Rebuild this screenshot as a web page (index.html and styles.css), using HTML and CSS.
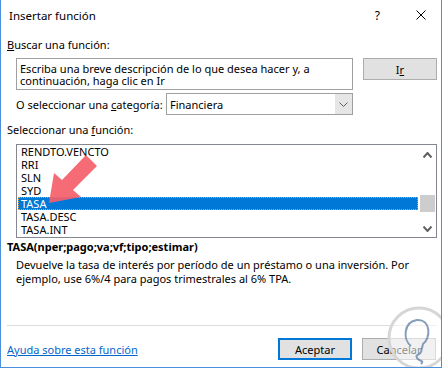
FILE: index.html
```html
<!DOCTYPE html>
<html lang="es">
<head>
    <meta charset="UTF-8">
    <title>Insertar función</title>
    <link rel="stylesheet" href="styles.css">
</head>
<body>
    <div class="dialog">
        <div class="titlebar">
            <span class="title">Insertar función</span>
            <span class="help">?</span>
            <svg class="close" width="10" height="10" viewBox="0 0 10 10">
                <path d="M0.5 0.5 L9.5 9.5 M9.5 0.5 L0.5 9.5" stroke="#000" stroke-width="1" fill="none"/>
            </svg>
        </div>

        <div class="content">
            <div class="label"><u>B</u>uscar una función:</div>
            <div class="search-row">
                <div class="search-box">Escriba una breve descripción de lo que desea hacer y, a continuación, haga clic en Ir</div>
                <button class="btn">I<u>r</u></button>
            </div>
            <div class="category-row">
                <span class="cat-label">O seleccionar una <u>c</u>ategoría:</span>
                <div class="select">
                    <span class="select-value">Financiera</span>
                    <span class="select-arrow">
                        <svg width="9" height="5" viewBox="0 0 9 5"><path d="M0.5 0.5 L4.5 4.5 L8.5 0.5" stroke="#606060" fill="none"/></svg>
                    </span>
                </div>
            </div>

            <div class="label list-label">Seleccionar una <u>f</u>unción:</div>
            <div class="listbox">
                <div class="items">
                    <div class="item">RENDTO.VENCTO</div>
                    <div class="item">RRI</div>
                    <div class="item">SLN</div>
                    <div class="item">SYD</div>
                    <div class="item selected">TASA</div>
                    <div class="item">TASA.DESC</div>
                    <div class="item">TASA.INT</div>
                </div>
                <div class="scrollbar">
                    <svg class="arrow-up" width="9" height="6" viewBox="0 0 9 6"><path d="M0.5 5.5 L4.5 1 L8.5 5.5" stroke="#606060" stroke-width="2" fill="none"/></svg>
                    <div class="thumb"></div>
                    <svg class="arrow-down" width="9" height="6" viewBox="0 0 9 6"><path d="M0.5 0.5 L4.5 5 L8.5 0.5" stroke="#606060" stroke-width="2" fill="none"/></svg>
                </div>
            </div>

            <div class="signature">TASA(nper;pago;va;vf;tipo;estimar)</div>
            <div class="description">Devuelve la tasa de interés por período de un préstamo o una inversión. Por ejemplo, use 6%/4 para pagos trimestrales al 6% TPA.</div>

            <div class="separator"></div>

            <div class="footer">
                <a class="help-link" href="#">Ayuda sobre esta función</a>
                <button class="btn btn-default">Aceptar</button>
                <button class="btn">Cancelar</button>
            </div>
        </div>

        <svg class="pointer" width="110" height="220" viewBox="0 0 110 220">
            <polygon points="48,203 53,173 61,180 85,155 96,166 72,190 80,197" fill="#f4606a" opacity="0.92"/>
        </svg>

        <svg class="watermark" width="64" height="70" viewBox="0 0 64 70">
            <circle cx="34" cy="38" r="30" fill="#ffffff" fill-opacity="0.55" stroke="#d6d6d6" stroke-width="3"/>
            <path d="M26 46 C18 40 18 22 32 20 C46 19 46 38 38 44 L36 52 C34 56 30 54 32 58 C34 62 40 60 36 64" stroke="#5d7ea6" stroke-width="2" fill="none" opacity="0.75"/>
        </svg>
    </div>
</body>
</html>
```

FILE: styles.css
```css
* {
    margin: 0;
    padding: 0;
    box-sizing: border-box;
}

body {
    background: white;
    font-family: "Noto Sans", sans-serif;
    font-size: 11px;
    color: #000;
}

.dialog {
    position: relative;
    width: 442px;
    height: 368px;
    border: 1px solid #4a8fdc;
    border-top: none;
    background: white;
    overflow: hidden;
}

.titlebar {
    height: 30px;
    display: flex;
    align-items: center;
    padding-left: 8px;
    font-size: 11.5px;
}

.title {
    flex-grow: 1;
}

.help {
    margin-right: 36px;
    font-size: 12px;
}

.close {
    margin-right: 15px;
}

.content {
    padding-left: 6px;
}

.label {
    line-height: 16px;
    margin-top: 7px;
}

.search-row {
    display: flex;
    align-items: flex-start;
    margin-top: 5px;
    padding-left: 9px;
}

.search-box {
    width: 337px;
    height: 32px;
    border: 1px solid #a0a0a0;
    padding: 4px 3px 0 3px;
    line-height: 12px;
}

.btn {
    width: 74px;
    height: 22px;
    margin-left: 10px;
    background: #e1e1e1;
    border: 1px solid #adadad;
    font-family: "Noto Sans", sans-serif;
    font-size: 11px;
    color: #000;
}

.category-row {
    display: flex;
    align-items: center;
    margin-top: 3px;
    padding-left: 9px;
}

.cat-label {
    width: 150px;
    white-space: nowrap;
}

.select {
    width: 187px;
    height: 22px;
    border: 1px solid #a0a0a0;
    display: flex;
    align-items: center;
}

.select-value {
    flex-grow: 1;
    padding-left: 3px;
}

.select-arrow {
    width: 17px;
    height: 20px;
    background: #e6e6e6;
    display: flex;
    align-items: center;
    justify-content: center;
}

.list-label {
    margin-top: 7px;
}

.listbox {
    margin-top: 6px;
    margin-left: 9px;
    width: 421px;
    height: 94px;
    border: 1px solid #828790;
    display: flex;
}

.items {
    flex-grow: 1;
}

.item {
    height: 13px;
    line-height: 13px;
    margin: 0 1px;
    padding-left: 3px;
}

.item.selected {
    background: #0078d7;
    color: white;
    outline: 1px dotted #f0a040;
    outline-offset: -1px;
}

.scrollbar {
    width: 17px;
    display: flex;
    flex-direction: column;
    align-items: center;
}

.arrow-up {
    margin-top: 7px;
}

.thumb {
    width: 15px;
    height: 17px;
    background: #cdcdcd;
    margin-top: 37px;
}

.arrow-down {
    margin-top: 14px;
}

.signature {
    font-weight: bold;
    line-height: 14px;
    margin-top: 2px;
}

.description {
    line-height: 14px;
    margin-top: 4px;
    padding-left: 9px;
    width: 420px;
}

.separator {
    height: 1px;
    background: #dcdcdc;
    margin-top: 39px;
    width: 430px;
}

.footer {
    display: flex;
    align-items: center;
    margin-top: 12px;
}

.help-link {
    color: #0066cc;
    text-decoration: underline;
    width: 271px;
}

.btn-default {
    border: 2px solid #0078d7;
    margin-left: 0;
}

.pointer {
    position: absolute;
    left: 0;
    top: 0;
}

.watermark {
    position: absolute;
    left: 384px;
    top: 300px;
}
```
